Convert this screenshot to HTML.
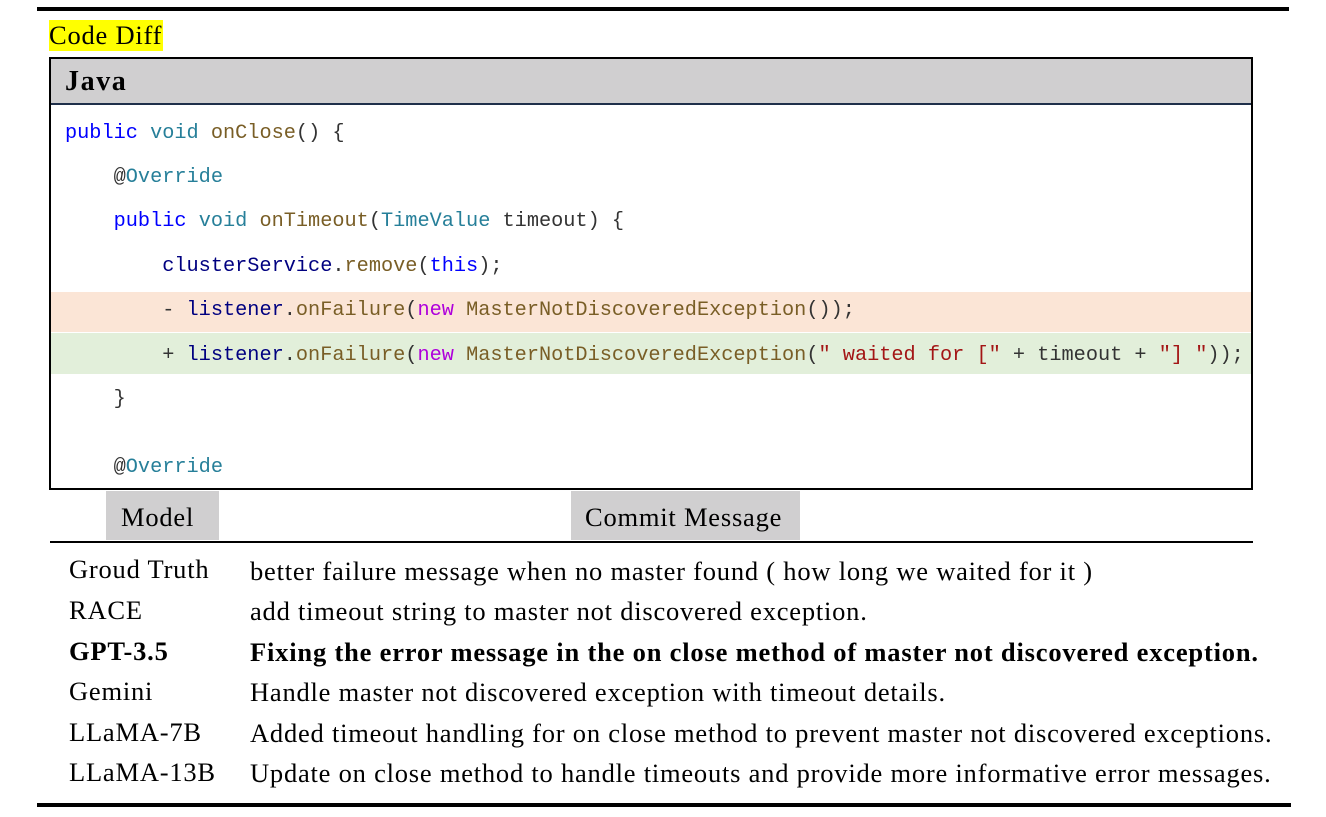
<!DOCTYPE html>
<html><head><meta charset="utf-8"><style>
body{margin:0;width:1326px;height:817px;background:#fff;position:relative;overflow:hidden;font-family:"Liberation Serif","Times New Roman",serif;}
.a{position:absolute;white-space:pre;}
.code{font-family:"Liberation Mono",monospace;font-size:20.25px;color:#333;line-height:24px;}
.kw{color:#0000ff}.ty{color:#267f99}.fn{color:#795e26}.id{color:#001080}.nw{color:#af00db}.st{color:#a31515}.nv{color:#000080}
.t{font-size:26.5px;line-height:30px;color:#000;letter-spacing:0.78px;font-family:"Liberation Serif",serif;}
.b{font-weight:bold;letter-spacing:0.81px}
</style></head><body>
<div class="a" style="left:37px;top:7px;width:1252px;height:4px;background:#000"></div>
<div class="a" style="left:49px;top:20px;width:114px;height:31px;background:#ffff00"></div>
<div class="a t" style="left:49px;top:20px;">Code Diff</div>
<div class="a" style="left:49px;top:57px;width:1200px;height:429px;border:2px solid #000"></div>
<div class="a" style="left:51px;top:59px;width:1200px;height:44px;background:#d0cfd0;border-bottom:2px solid #1f2f4a"></div>
<div class="a" style="left:65px;top:65px;font-size:28px;font-weight:bold;line-height:34px;letter-spacing:1.6px;font-family:'Liberation Serif',serif">Java</div>
<div class="a" style="left:51px;top:292px;width:1200px;height:40px;background:#fbe5d6"></div>
<div class="a" style="left:51px;top:333px;width:1200px;height:41px;background:#e2efda"></div>
<div class="a code" style="left:65px;top:122px;"><span class="kw">public</span> <span class="ty">void</span> <span class="fn">onClose</span>() {</div>
<div class="a code" style="left:65px;top:166px;">    @<span class="ty">Override</span></div>
<div class="a code" style="left:65px;top:210px;">    <span class="kw">public</span> <span class="ty">void</span> <span class="fn">onTimeout</span>(<span class="ty">TimeValue</span> timeout) {</div>
<div class="a code" style="left:65px;top:255px;">        <span class="nv">clusterService</span>.<span class="fn">remove</span>(<span class="kw">this</span>);</div>
<div class="a code" style="left:65px;top:299px;">        - <span class="nv">listener</span>.<span class="fn">onFailure</span>(<span class="nw">new</span> <span class="fn">MasterNotDiscoveredException</span>());</div>
<div class="a code" style="left:65px;top:344px;">        + <span class="nv">listener</span>.<span class="fn">onFailure</span>(<span class="nw">new</span> <span class="fn">MasterNotDiscoveredException</span>(<span class="st">" waited for ["</span> + timeout + <span class="st">"] "</span>));</div>
<div class="a code" style="left:65px;top:388px;">    }</div>
<div class="a code" style="left:65px;top:456px;">    @<span class="ty">Override</span></div>
<div class="a" style="left:106px;top:491px;width:113px;height:49px;background:#d0cfd0"></div>
<div class="a t" style="left:121px;top:502px;">Model</div>
<div class="a" style="left:571px;top:491px;width:229px;height:49px;background:#d0cfd0"></div>
<div class="a t" style="left:585px;top:502px;">Commit Message</div>
<div class="a" style="left:50px;top:541px;width:1203px;height:2px;background:#000"></div>
<div class="a t" style="left:69px;top:554px;">Groud Truth</div>
<div class="a t" style="left:250px;top:556px;">better failure message when no master found ( how long we waited for it )</div>
<div class="a t" style="left:69px;top:595px;">RACE</div>
<div class="a t" style="left:250px;top:596px;">add timeout string to master not discovered exception.</div>
<div class="a t b" style="left:69px;top:636px;">GPT-3.5</div>
<div class="a t b" style="left:250px;top:637px;">Fixing the error message in the on close method of master not discovered exception.</div>
<div class="a t" style="left:69px;top:676px;">Gemini</div>
<div class="a t" style="left:250px;top:677px;">Handle master not discovered exception with timeout details.</div>
<div class="a t" style="left:69px;top:717px;">LLaMA-7B</div>
<div class="a t" style="left:250px;top:718px;">Added timeout handling for on close method to prevent master not discovered exceptions.</div>
<div class="a t" style="left:69px;top:757px;">LLaMA-13B</div>
<div class="a t" style="left:250px;top:758px;">Update on close method to handle timeouts and provide more informative error messages.</div>
<div class="a" style="left:37px;top:803px;width:1254px;height:4px;background:#000"></div>
</body></html>
